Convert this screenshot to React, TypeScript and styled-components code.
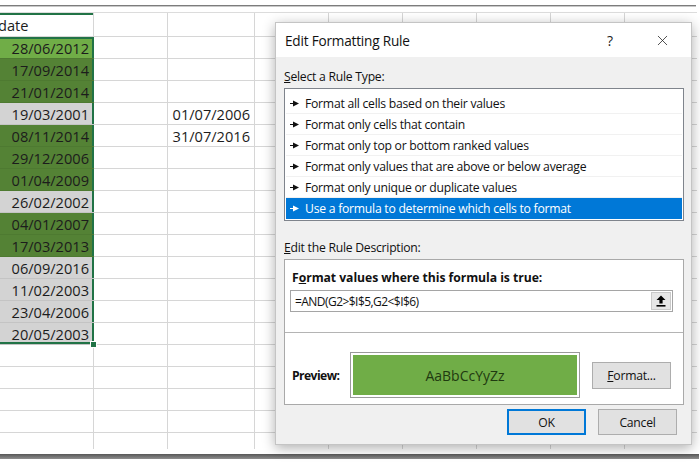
import React from "react";
import styled, { createGlobalStyle } from "styled-components";
import { X } from "lucide-react";

const GlobalStyle = createGlobalStyle`
  html, body { margin: 0; padding: 0; background: #ffffff; }
  body {
    width: 700px;
    height: 468px;
    overflow: hidden;
    font-family: "Open Sans", "Noto Sans", sans-serif;
    color: #000;
  }
`;

type Tone = "active" | "green" | "gray";

const toneColor: Record<Tone, string> = {
  active: "#70ad47",
  green: "#548235",
  gray: "#d3d3d3",
};

const rows: { date: string; tone: Tone; side?: string }[] = [
  { date: "28/06/2012", tone: "active" },
  { date: "17/09/2014", tone: "green" },
  { date: "21/01/2014", tone: "green" },
  { date: "19/03/2001", tone: "gray", side: "01/07/2006" },
  { date: "08/11/2014", tone: "green", side: "31/07/2016" },
  { date: "29/12/2006", tone: "green" },
  { date: "01/04/2009", tone: "green" },
  { date: "26/02/2002", tone: "gray" },
  { date: "04/01/2007", tone: "green" },
  { date: "17/03/2013", tone: "green" },
  { date: "06/09/2016", tone: "gray" },
  { date: "11/02/2003", tone: "gray" },
  { date: "23/04/2006", tone: "gray" },
  { date: "20/05/2003", tone: "gray" },
];

const ruleTypes = [
  "Format all cells based on their values",
  "Format only cells that contain",
  "Format only top or bottom ranked values",
  "Format only values that are above or below average",
  "Format only unique or duplicate values",
  "Use a formula to determine which cells to format",
];

const COLS = 9;
const EMPTY_ROWS = 5;

const Page = styled.div`
  position: relative;
  width: 700px;
  height: 468px;
  display: flex;
  flex-direction: column;
`;

const TopRule = styled.div`
  margin-top: 5px;
  width: 696px;
  height: 1px;
  background: #7c7c7c;
  border-bottom: 1px solid #c9c9c9;
`;

const Sheet = styled.div`
  margin-top: 5px;
  width: 697px;
  height: 436px;
  overflow: hidden;
  border-top: 1px solid #dcdcdc;
  display: grid;
  grid-template-columns: 94px 74px 87px repeat(6, 74px);
  grid-template-rows: 24px repeat(${14 + EMPTY_ROWS}, 22px);
  font-family: "Open Sans", sans-serif;
  font-size: 14.6px;
  color: #1c1c1c;
`;

const Cell = styled.div<{ $right?: boolean }>`
  position: relative;
  border-right: 1px solid #d6d6d6;
  border-bottom: 1px solid #d6d6d6;
  line-height: 22px;
  padding: 0 4px;
  white-space: nowrap;
  text-align: ${(p) => (p.$right ? "right" : "left")};
`;

const HeaderCell = styled(Cell)`
  box-shadow: inset 0 2px 0 #217346;
  padding-left: 0;
  padding-top: 1px;
  text-indent: -2px;
`;

const DateCell = styled(Cell)<{ $tone: Tone; $first?: boolean; $last?: boolean }>`
  background: ${(p) => toneColor[p.$tone]};
  border-right: none;
  padding-right: 5px;
  z-index: 2;
  box-shadow: inset -2px 0 0 #217346
    ${(p) => (p.$first ? ", inset 0 2px 0 #217346" : "")}
    ${(p) => (p.$last ? ", inset 0 -2px 0 #217346" : "")};
  border-bottom-color: ${(p) => (p.$tone === "gray" ? "#c4c4c4" : "#4e7a31")};
`;

const FillHandle = styled.span`
  position: absolute;
  right: -3px;
  bottom: -4px;
  width: 5px;
  height: 5px;
  background: #217346;
  border: 1px solid #ffffff;
`;

const BottomBar = styled.div`
  margin-top: 5px;
  width: 699px;
  height: 5px;
  background: linear-gradient(#575757, #8e8e8e);
`;

/* ---------- dialog ---------- */

const Dialog = styled.div`
  position: absolute;
  left: 275px;
  top: 22px;
  width: 417px;
  height: 423px;
  display: flex;
  flex-direction: column;
  background: #f0f0f0;
  border: 1px solid #c4c4c4;
  box-sizing: border-box;
  box-shadow: 0 3px 12px rgba(0, 0, 0, 0.32);
  font-family: "Open Sans", "Noto Sans", sans-serif;
  font-size: 12.2px;
  letter-spacing: -0.25px;
  z-index: 10;
`;

const TitleBar = styled.div`
  height: 34px;
  display: flex;
  align-items: center;
  background: #ffffff;
  padding-left: 9px;
`;

const Title = styled.div`
  font-size: 13.6px;
  letter-spacing: -0.2px;
  color: #111;
  flex: 1;
`;

const TitleButton = styled.div<{ $last?: boolean }>`
  width: 52px;
  height: 34px;
  display: flex;
  align-items: center;
  justify-content: center;
  font-size: 14px;
  color: #222;
  margin-right: ${(p) => (p.$last ? "3px" : "0")};
`;

const Body = styled.div`
  flex: 1;
  display: flex;
  flex-direction: column;
  padding: 12px 7px 0 8px;
`;

const SectionLabel = styled.div<{ $gap?: number }>`
  line-height: 16px;
  margin-top: ${(p) => p.$gap ?? 0}px;
  margin-bottom: 3px;
  color: #111;
`;

const RuleList = styled.div`
  width: 400px;
  box-sizing: border-box;
  background: #ffffff;
  border: 1px solid #7f848c;
  padding: 4px 1px 1px 1px;
`;

const RuleItem = styled.div<{ $selected?: boolean }>`
  height: 21px;
  box-sizing: border-box;
  display: flex;
  align-items: center;
  gap: 6px;
  padding-left: 4px;
  background: ${(p) => (p.$selected ? "#0078d7" : "transparent")};
  color: ${(p) => (p.$selected ? "#ffffff" : "#111")};
  border-bottom: 1px solid ${(p) => (p.$selected ? "#0078d7" : "#f1f1f1")};
`;

const DescPanel = styled.div`
  width: 400px;
  height: 146px;
  box-sizing: border-box;
  background: #ffffff;
  border: 1px solid #a9a9a9;
  display: flex;
  flex-direction: column;
`;

const FormulaSection = styled.div`
  height: 73px;
  box-sizing: border-box;
  padding: 9px 10px 0 5px;
  border-bottom: 1px solid #b4b4b4;
  display: flex;
  flex-direction: column;
  gap: 4px;
`;

const BoldLabel = styled.div`
  font-weight: 700;
  line-height: 17px;
  padding-left: 2px;
  letter-spacing: -0.05px;
  color: #111;
`;

const FormulaInput = styled.div`
  height: 22px;
  box-sizing: border-box;
  border: 1px solid #a5a5a5;
  display: flex;
  align-items: center;
  padding-left: 4px;
  color: #111;
`;

const FormulaText = styled.span`
  flex: 1;
  font-size: 12px;
  letter-spacing: -0.55px;
`;

const CollapseButton = styled.div`
  width: 20px;
  height: 18px;
  margin-right: 1px;
  box-sizing: border-box;
  background: #e6e6e6;
  border: 1px solid #c9c9c9;
  display: flex;
  align-items: center;
  justify-content: center;
`;

const PreviewSection = styled.div`
  flex: 1;
  display: flex;
  align-items: center;
  padding: 18px 0 5px 7px;
`;

const PreviewLabel = styled.div`
  width: 58px;
  font-weight: 700;
  letter-spacing: -0.6px;
  color: #111;
`;

const PreviewBox = styled.div`
  width: 230px;
  height: 46px;
  box-sizing: border-box;
  border: 1px solid #9a9a9a;
  padding: 2px;
  background: #ffffff;
  display: flex;
`;

const PreviewFill = styled.div`
  flex: 1;
  background: #70ad47;
  display: flex;
  align-items: center;
  justify-content: center;
  font-size: 14px;
  letter-spacing: 0;
  color: #1f3a10;
`;

const Button = styled.div<{ $primary?: boolean; $w?: number; $h?: number }>`
  width: ${(p) => p.$w ?? 79}px;
  height: ${(p) => p.$h ?? 26}px;
  box-sizing: border-box;
  background: #e1e1e1;
  border: 1px solid ${(p) => (p.$primary ? "#0078d7" : "#adadad")};
  box-shadow: ${(p) => (p.$primary ? "inset 0 0 0 1px #0078d7" : "none")};
  display: flex;
  align-items: center;
  justify-content: center;
  color: #111;
`;

const FormatButton = styled(Button)`
  margin-left: 12px;
`;

const ButtonRow = styled.div`
  display: flex;
  justify-content: flex-end;
  gap: 12px;
  margin-top: 4px;
  padding-right: 7px;
`;

const Arrow = () => (
  <svg width="9" height="7" viewBox="0 0 9 7">
    <rect x="0" y="3" width="4" height="1" fill="currentColor" />
    <path d="M3 0.5 L9 3.5 L3 6.5 Z" fill="currentColor" />
  </svg>
);

const CollapseIcon = () => (
  <svg width="10" height="12" viewBox="0 0 10 12">
    <path d="M5 0.5 L9.5 5 H6.6 V8.5 H3.4 V5 H0.5 Z" fill="#000" />
    <rect x="0.5" y="10" width="9" height="1.6" fill="#000" />
  </svg>
);

export default function App() {
  return (
    <Page>
      <GlobalStyle />
      <TopRule />
      <Sheet>
        <HeaderCell>date</HeaderCell>
        {Array.from({ length: COLS - 1 }).map((_, i) => (
          <Cell key={`h${i}`} />
        ))}
        {rows.map((r, i) => (
          <React.Fragment key={r.date}>
            <DateCell $right $tone={r.tone} $first={i === 0} $last={i === rows.length - 1}>
              {r.date}
              {i === rows.length - 1 && <FillHandle />}
            </DateCell>
            <Cell />
            <Cell $right>{r.side ?? ""}</Cell>
            {Array.from({ length: COLS - 3 }).map((_, j) => (
              <Cell key={j} />
            ))}
          </React.Fragment>
        ))}
        {Array.from({ length: EMPTY_ROWS * COLS }).map((_, i) => (
          <Cell key={`e${i}`} />
        ))}
      </Sheet>
      <BottomBar />

      <Dialog>
        <TitleBar>
          <Title>Edit Formatting Rule</Title>
          <TitleButton>?</TitleButton>
          <TitleButton $last>
            <X size={17} strokeWidth={1.1} />
          </TitleButton>
        </TitleBar>
        <Body>
          <SectionLabel>
            <u>S</u>elect a Rule Type:
          </SectionLabel>
          <RuleList>
            {ruleTypes.map((t, i) => (
              <RuleItem key={t} $selected={i === ruleTypes.length - 1}>
                <Arrow />
                <span>{t}</span>
              </RuleItem>
            ))}
          </RuleList>
          <SectionLabel $gap={19}>
            <u>E</u>dit the Rule Description:
          </SectionLabel>
          <DescPanel>
            <FormulaSection>
              <BoldLabel>
                F<u>o</u>rmat values where this formula is true:
              </BoldLabel>
              <FormulaInput>
                <FormulaText>=AND(G2&gt;$I$5,G2&lt;$I$6)</FormulaText>
                <CollapseButton>
                  <CollapseIcon />
                </CollapseButton>
              </FormulaInput>
            </FormulaSection>
            <PreviewSection>
              <PreviewLabel>Preview:</PreviewLabel>
              <PreviewBox>
                <PreviewFill>AaBbCcYyZz</PreviewFill>
              </PreviewBox>
              <FormatButton $h={27}>
                <span>
                  <u>F</u>ormat...
                </span>
              </FormatButton>
            </PreviewSection>
          </DescPanel>
          <ButtonRow>
            <Button $primary>OK</Button>
            <Button>Cancel</Button>
          </ButtonRow>
        </Body>
      </Dialog>
    </Page>
  );
}
